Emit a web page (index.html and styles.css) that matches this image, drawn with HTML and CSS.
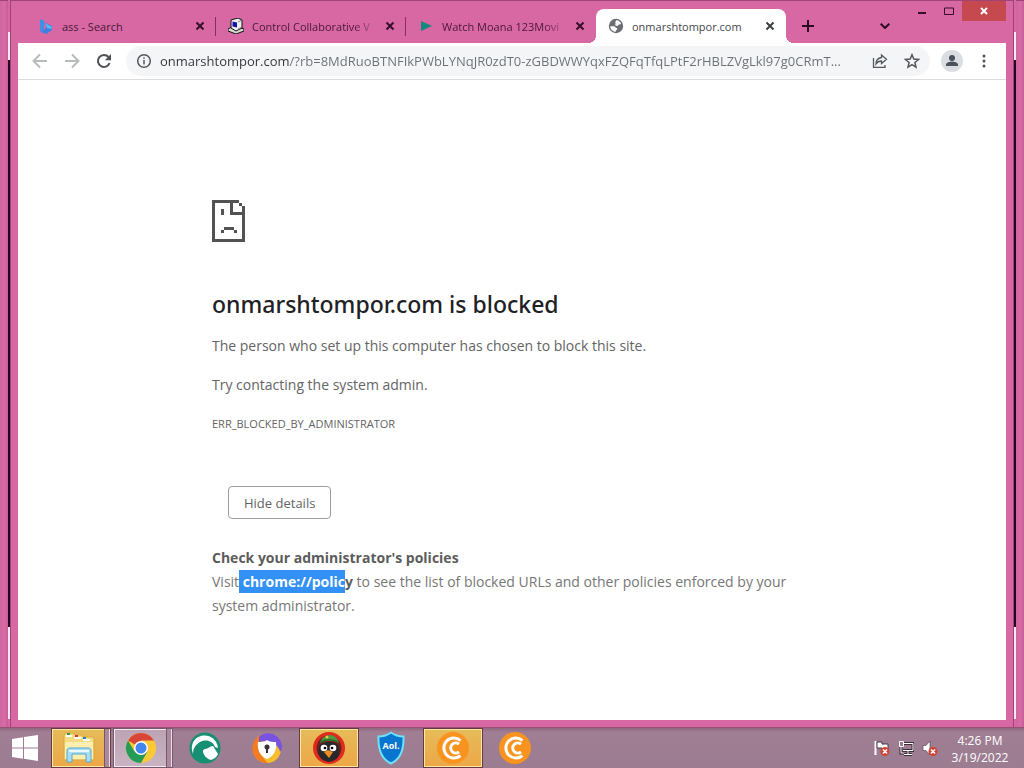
FILE: index.html
```html
<!DOCTYPE html>
<html lang="en">
  <head>
    <meta charset="UTF-8" />
    <meta name="viewport" content="width=device-width, initial-scale=1.0" />
    <title>onmarshtompor.com</title>
    <link rel="stylesheet" href="styles.css">
  </head>
  <body>
    <div class="desktop">
      <div class="edge"></div>
      <div class="strip"></div>
      <div class="window">
        <div class="titlebar">
          <div class="tabs">
            <div class="tab">
              <svg class="favicon" viewBox="0 0 16 16">
                <path d="M2 1l4 1.500v9L2 14z" fill="#3d8fe8" />
                <path d="M3 14l5-4V8L6 4l8 4v4l-6 4z" fill="#3f7fe0" />
                <path d="M7 5l7 4-1 2-4-1z" fill="#59b7f2" />
              </svg>
              <button class="tab-title">ass - Search</button>
              <button class="tab-close" aria-label="Close tab"><svg viewBox="0 0 10 10"><path d="M1.500 1.500l7 7M8.500 1.500l-7 7" /></svg></button>
            </div>
            <div class="tab">
              <svg class="favicon" viewBox="0 0 16 16">
                <path d="M0 11l6-3 10 3v2l-8 3-8-3z" fill="#d8d8d0" stroke="#111" />
                <path d="M3 2l7-2 4 2v8l-6 3-5-3z" fill="#eee" stroke="#111" />
                <path d="M4.500 3.500L9 4.500v5l-4.500-1z" fill="#1212a8" />
                <path d="M10 4l3-1.500M10 11l3-1.500" stroke="#888" />
              </svg>
              <button class="tab-title fade">Control Collaborative V</button>
              <button class="tab-close" aria-label="Close tab"><svg viewBox="0 0 10 10"><path d="M1.500 1.500l7 7M8.500 1.500l-7 7" /></svg></button>
            </div>
            <div class="tab">
              <svg class="favicon" viewBox="0 0 16 16"><path d="M3 3l11 5-11 5z" fill="#16877f" /></svg>
              <button class="tab-title fade">Watch Moana 123Movi</button>
              <button class="tab-close" aria-label="Close tab"><svg viewBox="0 0 10 10"><path d="M1.500 1.500l7 7M8.500 1.500l-7 7" /></svg></button>
            </div>
            <div class="tab active">
              <svg class="favicon" viewBox="0 0 16 16">
                <circle cx="8" cy="8" r="7.200" fill="#6a6e72" />
                <path d="M8.500 2.300c2 .2 3.800 1.500 4.600 3.200-1.100 1.300-2.300.6-2.700 1.600-.6 1.300-2 .8-2.800.3C6.500 6.700 8 6 7.500 5.200 7 4.300 7.600 3 8.500 2.300zM2.200 8.200h3.900c1.500.2 1.100 1.700 2.400 1.800 1.200.2.9 1.500 0 1.900-.8.500-.6 1.300-.9 1.900C4.700 13.600 2.200 11.200 2.200 8.200z" fill="#fff" />
              </svg>
              <button class="tab-title">onmarshtompor.com</button>
              <button class="tab-close" aria-label="Close tab"><svg viewBox="0 0 10 10"><path d="M1.500 1.500l7 7M8.500 1.500l-7 7" /></svg></button>
            </div>
          </div>
          <button class="new-tab" aria-label="New tab"><svg width="12" height="12" viewBox="0 0 12 12"><path d="M6 0v12M0 6h12" /></svg></button>
          <button class="tab-search" aria-label="Search tabs"><svg width="10" height="6" viewBox="0 0 10 6"><path d="M.7.7L5 5 9.300.7" /></svg></button>
          <div class="controls">
            <button class="control" aria-label="Minimize"><svg width="8" height="10" viewBox="0 0 8 10"><path d="M0 7h8" /></svg></button>
            <button class="control" aria-label="Maximize"><svg width="10" height="8" viewBox="0 0 10 8"><path d="M.5 1h9v6.500h-9z" /></svg></button>
            <button class="control close" aria-label="Close"><svg width="8" height="8" viewBox="0 0 8 8"><path d="M1 1l6 6M7 1L1 7" /></svg></button>
          </div>
        </div>

        <div class="browser">
          <div class="toolbar">
            <button class="nav" aria-label="Back"><svg class="faded" width="16" height="16" viewBox="0 0 16 16"><path d="M15 8H2M8 1.500L1.500 8 8 14.500" /></svg></button>
            <button class="nav" aria-label="Forward"><svg class="faded" width="16" height="16" viewBox="0 0 16 16"><path d="M1 8h13M8 1.500L14.500 8 8 14.500" /></svg></button>
            <button class="nav" aria-label="Reload"><svg width="16" height="16" viewBox="0 0 16 16"><path d="M13.600 10A6 6 0 1 1 12.500 4" stroke-width="2" /><path d="M15 1v6.200H8.800z" class="solid" /></svg></button>
            <div class="omnibox">
              <button class="chip" aria-label="Site information"><svg width="16" height="16" viewBox="0 0 16 16"><circle cx="8" cy="8" r="6.300" /><path d="M8 7v4.500M8 4.200v1.600" /></svg></button>
              <input class="url" type="text" aria-label="Address" value="onmarshtompor.com/?rb=8MdRuoBTNFIkPWbLYNqJR0zdT0-zGBDWWYqxFZQFqTfqLPtF2rHBLZVgLkl97g0CRmT..." />
              <button class="chip" aria-label="Share"><svg width="16" height="16" viewBox="0 0 16 16"><path d="M1.500 5v9.300H13V12" stroke-width="1.300" /><path d="M9.500 2l5 4.300-5 4.300V8C7 8 5.200 9 4 11c0-3.500 2-6 5.500-6.500z" stroke-width="1.300" /></svg></button>
              <button class="chip star" aria-label="Bookmark"><svg width="16" height="16" viewBox="0 0 16 16"><path d="M8 1.800l1.800 4.300 4.700.4-3.600 3 1.100 4.600L8 11.700l-4 2.400 1.100-4.600-3.600-3 4.700-.4z" /></svg></button>
            </div>
            <button class="avatar" aria-label="Profile"><svg width="22" height="22" viewBox="0 0 22 22"><circle cx="11" cy="11" r="11" fill="#dadde2" /><circle cx="11" cy="8" r="3" fill="#4a5159" /><path d="M5 16v-1.500c0-2 4-3 6-3s6 1 6 3V16z" fill="#4a5159" /></svg></button>
            <button class="menu" aria-label="Menu"><svg width="4" height="14" viewBox="0 0 4 14"><circle cx="2" cy="2" r="1.500" /><circle cx="2" cy="7" r="1.500" /><circle cx="2" cy="12" r="1.500" /></svg></button>
          </div>

          <main class="page">
            <div class="error">
              <svg class="sad" width="33" height="42" viewBox="0 0 33 42" shape-rendering="crispEdges">
                <path d="M0 0h27v3h-6v9h9V6h3v36H0zM3 3v36h27V15H18V3z" fill="#535353" fill-rule="evenodd" />
                <path d="M27 3h3v3h-3zM9 9h3v6H9zM12 27h10v3H12zM9 30h3v3H9zM22 30h3v3h-3z" fill="#535353" />
              </svg>
              <h1>onmarshtompor.com is blocked</h1>
              <p>The person who set up this computer has chosen to block this site.</p>
              <p>Try contacting the system admin.</p>
              <div class="code">ERR_BLOCKED_BY_ADMINISTRATOR</div>
              <button class="details">Hide details</button>
              <div class="policies">
                <h2>Check your administrator's policies</h2>
                <p>Visit<b class="selected"> chrome://polic</b><b>y</b> to see the list of blocked URLs and other policies enforced by your system administrator.</p>
              </div>
            </div>
          </main>
        </div>
      </div>
      <div class="strip"></div>
      <div class="edge"></div>
    </div>

    <div class="taskbar">
      <button class="start" aria-label="Start">
        <svg width="28" height="28" viewBox="0 0 28 28"><path d="M1 5l11-1.700v10.200H1zM13 3l14-2v12.500H13zM1 14.500h11v10.200L1 23zM13 14.500h14V27l-14-2.200z" fill="#fff" /></svg>
      </button>
      <button class="task stacked gold" aria-label="File Explorer">
        <svg width="32" height="32" viewBox="0 0 32 32">
          <path d="M1 3l2-2h7l2 2h6l2 2h10l1 2v21H1z" fill="#f5dc83" stroke="#d9a941" />
          <path d="M3 4h6M11 6h7M20 8h7" stroke="#fff" stroke-width="2" />
          <path d="M4 2h3" stroke="#2b9a4b" stroke-width="2" /><path d="M12 4h3" stroke="#c9402c" stroke-width="2" /><path d="M20 6h3" stroke="#2a7fc5" stroke-width="2" />
          <path d="M2 10h28v17H2z" fill="#fbeeb0" />
          <path d="M4 30V19c0-2 1-3 3-3h18c2 0 3 1 3 3v11h-5v-8H9v8z" fill="#a9ddf3" stroke="#55a9cf" />
          <path d="M6 19h20" stroke="#e8faff" stroke-width="2" />
        </svg>
      </button>
      <button class="task stacked silver" aria-label="Chrome">
        <svg width="32" height="32" viewBox="0 0 32 32">
          <circle cx="16" cy="16" r="15" fill="#fbc934" />
          <path d="M16 16L3 8.500A15 15 0 0 1 29 8.500H16z" fill="#d94637" />
          <path d="M3 8.500A15 15 0 0 0 16 31l6.500-11.500L16 16 9.500 19.500z" fill="#249c57" />
          <circle cx="16" cy="16" r="7" fill="#fff" /><circle cx="16" cy="16" r="5.500" fill="#4486ee" />
        </svg>
      </button>
      <button class="task" aria-label="Web Companion">
        <svg width="32" height="32" viewBox="0 0 32 32">
          <circle cx="16" cy="16" r="15.500" fill="#168f72" />
          <path d="M4 22C1 14 4 6 12 4c8-2 16 3 17 12l-3-1C24 9 17 7 11 10c-5 3-7 7-7 12z" fill="#fff" />
          <path d="M14 19c0-1 1-2 2-2 3 0 5-3 8-3l5 8c-1 3-4 5-7 6-4-1-8-5-8-9z" fill="#fff" />
        </svg>
      </button>
      <button class="task" aria-label="Secure Browser">
        <svg width="32" height="32" viewBox="0 0 32 32">
          <circle cx="16" cy="17" r="14" fill="#f8bd2c" />
          <path d="M9 3C1 8-1 18 4 25c3 4 8 6 13 6C10 25 7 18 9 3z" fill="#f47b20" />
          <path d="M8 5C15-2 29 1 31 14c0 3-1 5-2 6-1-7-9-12-21-10z" fill="#7852e0" />
          <path d="M16 8c3 2 6 2 9 2 1 8-2 14-9 17-7-3-10-9-9-17 4 0 6 0 9-2z" fill="#fff" />
          <circle cx="16" cy="15" r="2.500" fill="#333" /><path d="M15 15h2v6h-2z" fill="#333" />
        </svg>
      </button>
      <button class="task gold" aria-label="Bird game">
        <svg width="34" height="34" viewBox="0 0 34 34">
          <circle cx="17" cy="17" r="16" fill="#e02a20" /><circle cx="17" cy="17" r="12.500" fill="#6f211c" />
          <path d="M7 17c0-8 20-8 20 0 2 6-1 13-10 14C8 30 5 23 7 17z" fill="#29282a" />
          <path d="M8 12c1-5 5-7 9-8 5 0 9 3 10 8-6-3-13-3-19 0z" fill="#4d9a42" /><path d="M8 11c6-3 12-3 18 0" stroke="#2d692e" stroke-width="1.500" fill="none" />
          <circle cx="15" cy="6" r="1.500" fill="#f1c62e" />
          <circle cx="12" cy="17" r="3.300" fill="#fff" /><circle cx="21" cy="17" r="3.300" fill="#fff" /><circle cx="13" cy="17" r="1.300" /><circle cx="20" cy="17" r="1.300" />
          <path d="M12 21l4-2 5 2-4 6z" fill="#f18b24" />
        </svg>
      </button>
      <button class="task" aria-label="AOL Shield">
        <svg width="28" height="34" viewBox="0 0 28 34">
          <path d="M14 1.500c4 3 8 4 12.500 4C27 19 24 28 14 32.500 4 28 1 19 1.500 5.500 6 5.500 10 4.500 14 1.500z" fill="#0875cf" stroke="#70e0f7" stroke-width="2" />
          <text x="14" y="18" class="aol">Aol.</text>
        </svg>
      </button>
      <button class="task gold" aria-label="CryptoTab">
        <svg width="32" height="32" viewBox="0 0 32 32"><circle cx="16" cy="16" r="16" fill="#f7931e" /><path d="M23.500 8.500A10 10 0 1 0 23.500 23.500M22 12.200a5 5 0 1 0 0 7.600" class="crypto" /></svg>
      </button>
      <button class="task" aria-label="CryptoTab Browser">
        <svg width="32" height="32" viewBox="0 0 32 32"><circle cx="16" cy="16" r="16" fill="#f7931e" /><path d="M23.500 8.500A10 10 0 1 0 23.500 23.500M22 12.200a5 5 0 1 0 0 7.600" class="crypto" /></svg>
      </button>

      <div class="tray">
        <svg width="16" height="16" viewBox="0 0 16 16">
          <path d="M1.500 1v14" stroke="#fff" stroke-width="2" /><path d="M3 2h5v2h6v6H8V8H3z" fill="#fff" stroke="#4a3944" />
          <circle cx="11" cy="11.500" r="4.500" fill="#cf4636" /><path d="M9 9.500l4 4M13 9.500l-4 4" stroke="#fff" stroke-width="1.500" />
        </svg>
        <svg width="16" height="16" viewBox="0 0 16 16">
          <path d="M6 3.500h9v7H5M10 11v3M6 14.500h8M3 7v6h3" fill="none" stroke="#3c2d39" stroke-width="3" />
          <path d="M6 3.500h9v7H5M10 11v3M6 14.500h8M3 7v6h3M1.500 1.500h4v5h-4z" fill="none" stroke="#fff" />
        </svg>
        <svg width="16" height="16" viewBox="0 0 16 16">
          <path d="M1 5.500h3l4-4.500v14l-4-4.500H1z" fill="#fff" stroke="#4a3944" stroke-width=".6" />
          <circle cx="11" cy="11.500" r="4.500" fill="#cf4636" /><path d="M9 9.500l4 4M13 9.500l-4 4" stroke="#fff" stroke-width="1.500" />
        </svg>
      </div>
      <div class="clock">
        <div>4:26 PM</div>
        <div>3/19/2022</div>
      </div>
    </div>
  </body>
</html>
```
FILE: styles.css
```css
* {
  box-sizing: border-box;
}
:root {
  --pink: #d768a3;
  --pink-dark: #a04477;
}
body {
  margin: 0;
  min-height: 100vh;
  display: flex;
  flex-direction: column;
  font-family: "Open Sans", "Noto Sans", sans-serif;
  font-size: 14px;
  color: #646464;
}
h1,
h2,
p {
  margin: 0;
}
button {
  display: flex;
  align-items: center;
  justify-content: center;
  flex: none;
  padding: 0;
  border: 0;
  background: none;
  color: inherit;
  font: inherit;
}
svg {
  flex: none;
}

/* window frame */
.desktop {
  flex: 1;
  display: grid;
  grid-template-columns: 8px 2px 1fr 2px 8px;
  background: var(--pink);
  border-bottom: 1px solid #955274;
}
.edge {
  background: linear-gradient(90deg, #cf669f, #d96aa5 60%, #c45c94);
  border-top: 1px solid var(--pink-dark);
}
.strip {
  margin: 32px 0 8px;
  background: linear-gradient(#fbe9f2 28px, #26071f 28px, #26071f calc(100% - 92px), #fbe9f2 calc(100% - 92px));
}
.window {
  min-width: 0;
  display: flex;
  flex-direction: column;
  padding: 0 7px 7px;
  border: 1px solid var(--pink-dark);
  border-bottom: 0;
}
.titlebar {
  display: flex;
  height: 42px;
  padding-left: 8px;
}
.tabs {
  display: flex;
  padding-top: 8px;
}
.tab {
  position: relative;
  display: flex;
  align-items: center;
  width: 190px;
  padding: 0 8px 0 12px;
  color: #4a1738;
}
.tab:nth-child(-n + 2)::after {
  content: "";
  position: absolute;
  right: 0;
  top: 8px;
  width: 1px;
  height: 19px;
  background: #83305f;
}
.tab.active {
  background: #fff;
  border-radius: 8px 8px 0 0;
  color: #45484c;
}
.active::before,
.active::after {
  content: "";
  position: absolute;
  bottom: 0;
  left: -8px;
  width: 8px;
  height: 8px;
  background: radial-gradient(circle at 0 0, transparent 8px, #fff 8px);
}
.active::after {
  left: auto;
  right: -8px;
  background: radial-gradient(circle at 100% 0, transparent 8px, #fff 8px);
}
.favicon {
  width: 16px;
  height: 16px;
}
.tab-title {
  flex: 1;
  justify-content: flex-start;
  min-width: 0;
  margin: 0 4px 0 8px;
  overflow: hidden;
  white-space: nowrap;
  font-size: 11px;
}
.tab-title.fade {
  mask-image: linear-gradient(90deg, #000 calc(100% - 24px), transparent);
}
.tab-close {
  width: 16px;
  height: 16px;
}
.tab-close svg {
  width: 10px;
  height: 10px;
  fill: none;
  stroke: #350f2a;
  stroke-width: 2;
}
.active .tab-close svg {
  stroke: #3c4043;
}
.new-tab,
.tab-search {
  width: 28px;
  margin: 8px 0 0 8px;
  stroke: #2d0b22;
  stroke-width: 2;
  fill: none;
}
.tab-search {
  margin-left: auto;
}
.controls {
  display: flex;
  height: 20px;
  margin-left: 9px;
}
.control {
  width: 27px;
  stroke: #350f2a;
  stroke-width: 2;
  fill: none;
}
.control:nth-child(2) {
  stroke-width: 1;
}
.control.close {
  width: 44px;
  background: #c5494f;
  stroke: #fff;
}

/* browser */
.browser {
  flex: 1;
  background: #fff;
}
.toolbar {
  display: flex;
  align-items: center;
  height: 37px;
  padding: 0 12px 0 6px;
  border-bottom: 1px solid #dcdcdf;
}
.nav {
  width: 32px;
  height: 32px;
  fill: none;
  stroke: #4e5256;
  stroke-width: 2;
}
.nav .solid {
  fill: #4e5256;
  stroke: none;
}
.faded {
  stroke: #b8babd;
}
.omnibox {
  flex: 1;
  min-width: 0;
  display: flex;
  align-items: center;
  height: 30px;
  margin-left: 6px;
  padding: 0 2px 0 2px;
  border-radius: 15px;
  background: #f3f5f7;
}
.chip {
  width: 32px;
  height: 28px;
  fill: none;
  stroke: #54585c;
  stroke-width: 1.5;
}
.url {
  flex: 1;
  min-width: 0;
  padding: 0;
  border: 0;
  outline: 0;
  font: inherit;
  font-size: 13px;
  color: transparent;
  text-overflow: ellipsis;
  background: linear-gradient(90deg, #303438 129px, #6b7075 129px);
  background-clip: text;
}
.avatar {
  width: 22px;
  height: 22px;
  margin-left: 11px;
}
.menu {
  width: 20px;
  height: 28px;
  margin-left: 11px;
  fill: #4e5256;
}

/* error page */
.page {
  padding: 120px 24px 0;
}
.error {
  max-width: 600px;
  margin: 0 auto;
  line-height: 24px;
}
.sad {
  display: block;
}
.error h1 {
  margin: 47px 0 15px;
  color: #202124;
  font-family: "Noto Sans", "Open Sans", sans-serif;
  font-size: 23px;
  font-weight: 500;
  line-height: 30px;
}
.error > p {
  margin-bottom: 15px;
}
.code {
  font-size: 11px;
}
.details {
  margin: 50px 0 27px 16px;
  padding: 0 15px;
  height: 33px;
  border: 1px solid #9a9da1;
  border-radius: 4px;
  font-size: 13px;
}
.error h2 {
  font-size: 14px;
  font-weight: bold;
}
.policies {
  color: #777;
}
.policies h2,
.policies b {
  color: #5c5c5c;
}
.policies .selected {
  padding: 2px 0;
  background: #3390f5;
  color: #fff;
}

/* taskbar */
.taskbar {
  display: flex;
  gap: 2px;
  height: 40px;
  background: linear-gradient(#8f6680, #a07e93 4px, #9b7c90);
}
.start {
  width: 49px;
}
.task {
  width: 60px;
}
.gold,
.silver {
  border: 1px solid #6b3740;
  background: linear-gradient(#e6bb59, #eda746);
  box-shadow: inset 0 0 0 1px #ffe9a6;
}
.silver {
  border-color: #78566d;
  background: linear-gradient(#bba3b4, #c9b4c2);
  box-shadow: inset 0 0 0 1px #f5eaf2;
}
.stacked {
  position: relative;
  padding-right: 5px;
}
.stacked::after {
  content: "";
  position: absolute;
  top: 0;
  right: 0;
  bottom: 0;
  width: 4px;
  border-left: 1px solid #78566d;
  border-right: 1px solid #f0dfe9;
  background: #a98a9d;
}
.aol {
  fill: #fff;
  font-size: 9px;
  font-weight: bold;
  text-anchor: middle;
}
.crypto {
  fill: none;
  stroke: #fff;
  stroke-width: 3;
}
.tray {
  display: flex;
  align-items: center;
  gap: 8px;
  margin-left: auto;
}
.clock {
  display: flex;
  flex-direction: column;
  justify-content: center;
  width: 84px;
  padding: 2px 4px 0 0;
  color: #fff;
  font-size: 12px;
  line-height: 17px;
  text-align: center;
}
```
